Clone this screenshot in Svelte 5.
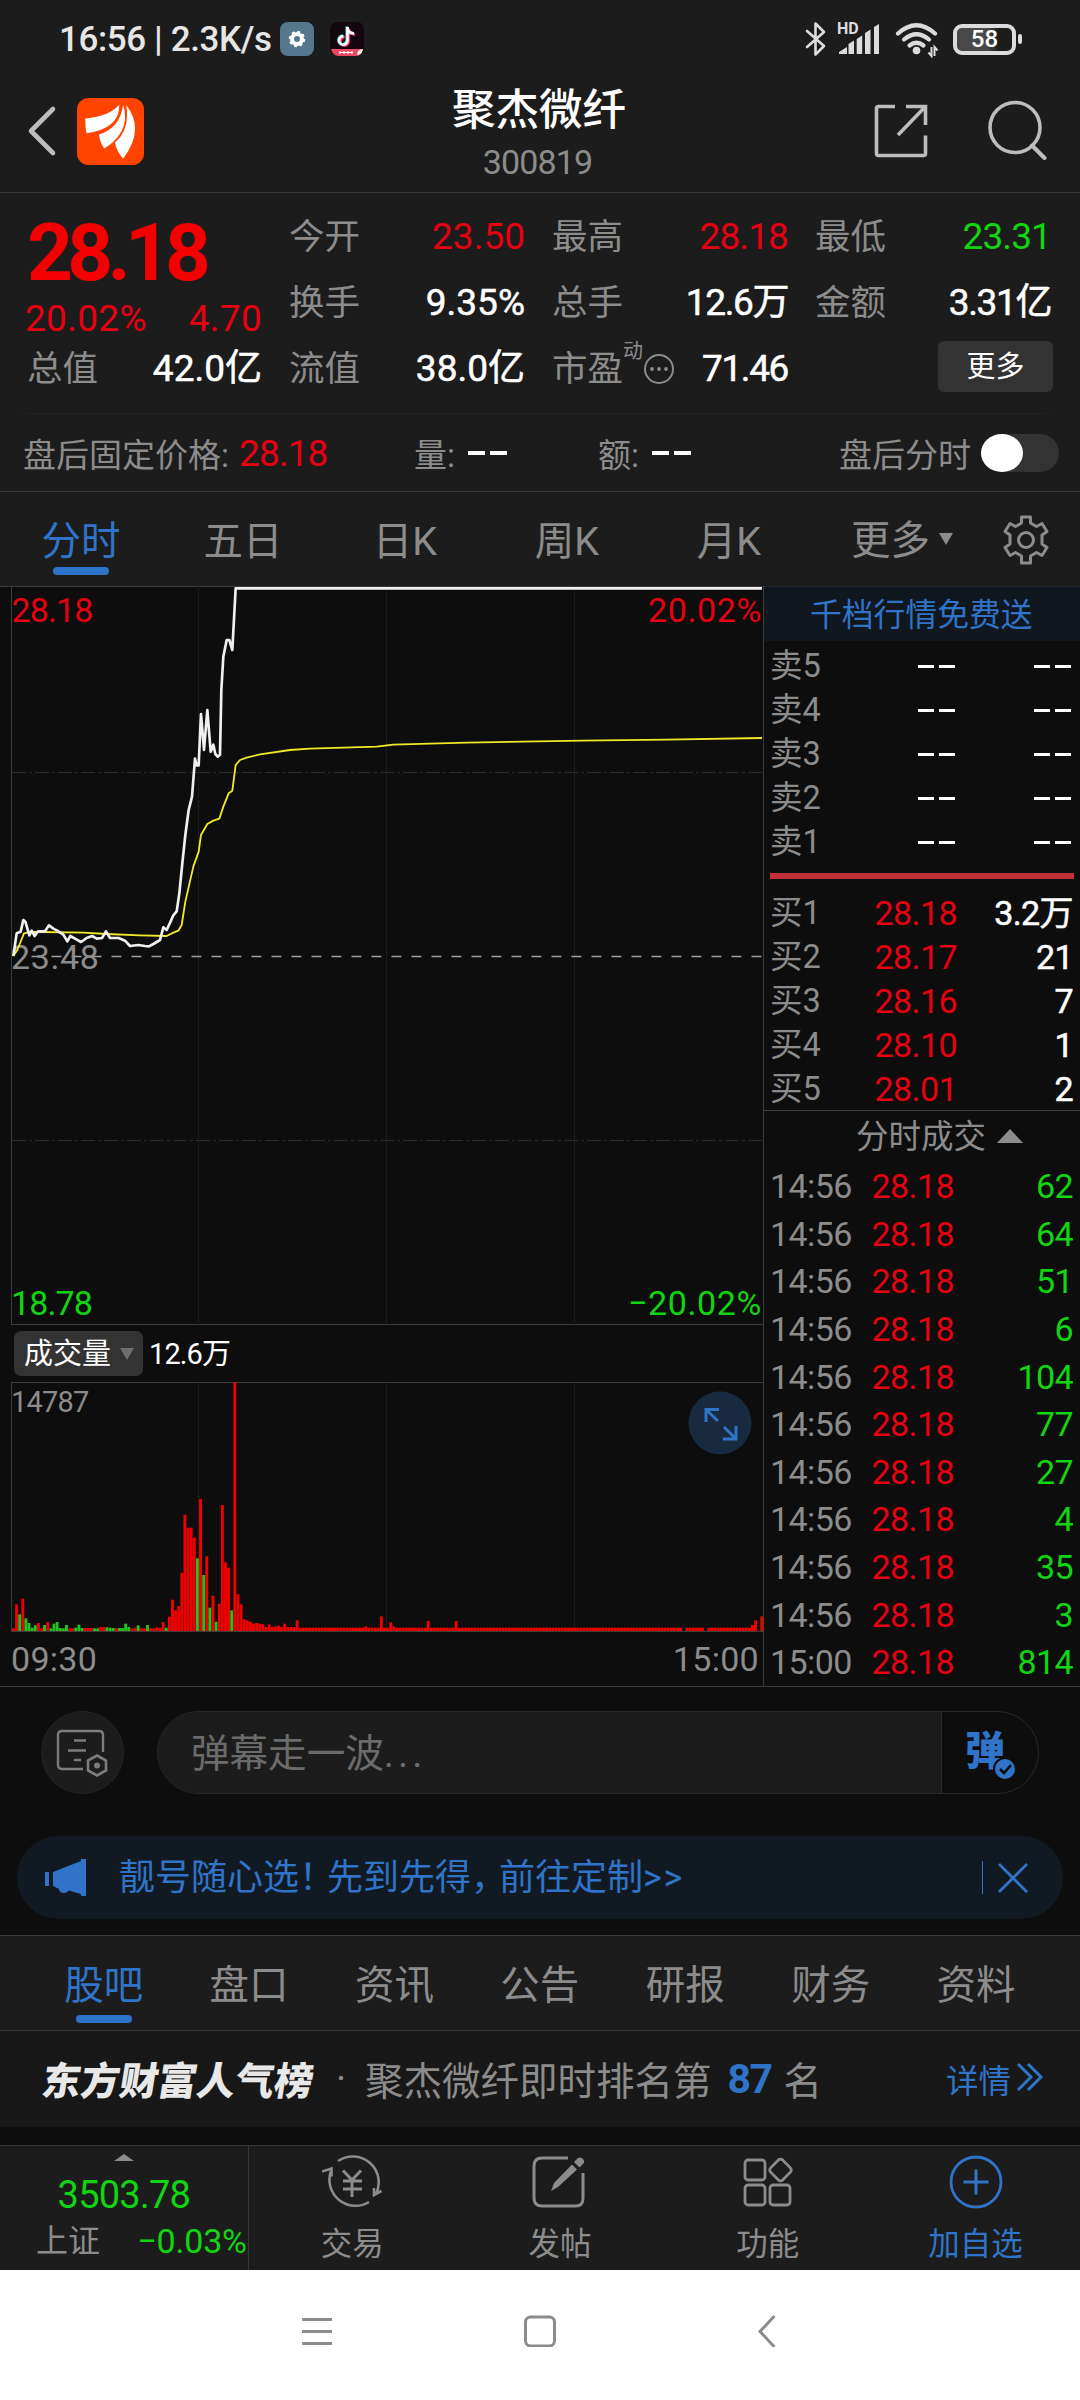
<script>
  const stats = [
    { label: '今开', value: '23.50', tone: 'red', col: 2, row: 1 },
    { label: '最高', value: '28.18', tone: 'red', col: 3, row: 1 },
    { label: '最低', value: '23.31', tone: 'green', col: 4, row: 1 },
    { label: '换手', value: '9.35%', tone: 'white', col: 2, row: 2 },
    { label: '总手', value: '12.6万', tone: 'white', col: 3, row: 2 },
    { label: '金额', value: '3.31亿', tone: 'white', col: 4, row: 2 },
    { label: '总值', value: '42.0亿', tone: 'white', col: 1, row: 3 },
    { label: '流值', value: '38.0亿', tone: 'white', col: 2, row: 3 }
  ];
  const periods = ['分时', '五日', '日K', '周K', '月K'];
  const sells = [5, 4, 3, 2, 1];
  const buys = [
    ['28.18', '3.2万'],
    ['28.17', '21'],
    ['28.16', '7'],
    ['28.10', '1'],
    ['28.01', '2']
  ];
  const trades = [
    ['14:56', 62], ['14:56', 64], ['14:56', 51], ['14:56', 6], ['14:56', 104], ['14:56', 77],
    ['14:56', 27], ['14:56', 4], ['14:56', 35], ['14:56', 3], ['15:00', 814]
  ];
  const sections = ['股吧', '盘口', '资讯', '公告', '研报', '财务', '资料'];

  // Minute volumes, in thirds of a pixel; a negative number is a falling minute.
  const volumes = [
    8, 80, -50, 97, -38, -24, -10, -17, 24, 8, -18, 27, -8, -22, -27, -9, -8, -18, 8, 8, -10, -19, -9, 9, 9,
    9, -8, -8, 12, 12, -11, -10, -9, 8, -9, -9, -22, -12, 8, 10, -17, 8, 8, -18, 8, 8, 11, 10, 27, -10, 43,
    94, 62, 75, 175, 349, 310, 310, 280, -218, 396, -168, 224, -70, 106, -28, 82, 378, 206, 190, -62, 746,
    110, 80, 35, 32, 28, 22, 24, 22, 20, 12, 20, 12, 14, 16, 12, 22, 12, 12, 12, 32
  ];
  const spikes = { 113: 14, 118: 44, 121: 26, 122: 14, 133: 30, 142: 30, 215: 0, 222: 0, 237: 18, 238: 32, 239: 0, 240: 44 };
  const bars = Array.from({ length: 241 }, (_, i) => {
    const v = volumes[i] ?? spikes[i] ?? 10;
    return { x: 12 + i * 3.118, h: Math.abs(v) / 3, up: v > 0 };
  });

  const price =
    '40,1128 50,1060 62,1055 70,1020 76,1025 88,1066 95,1052 104,1068 114,1054 135,1054 147,1036 160,1046 172,1052 190,1064 202,1084 211,1068 225,1076 243,1086 260,1074 276,1068 290,1076 306,1074 318,1054 330,1074 356,1074 375,1082 390,1098 415,1095 435,1098 447,1099 460,1092 480,1080 490,1042 500,1050 512,1024 520,1006 530,994 538,940 548,840 556,765 566,690 576,650 585,536 590,556 596,556 603,402 612,510 622,390 632,515 640,494 646,522 653,530 660,524 664,330 670,230 680,180 688,180 697,210 707,25 2286,25';
  const average =
    '40,1128 52,1110 72,1060 90,1056 120,1056 250,1058 320,1062 420,1066 500,1068 520,1058 535,1052 545,1035 556,965 580,860 596,815 603,765 622,732 640,722 658,716 670,680 686,640 697,632 707,555 720,540 740,533 780,523 870,510 930,506 1130,500 1180,494 1400,488 1745,482 2000,479 2286,474';
</script>

<div class="screen">
  <div class="status">
    <span class="clock">16:56 | 2.3K/s</span>
    <svg class="app-gear" viewBox="0 0 34 34"><rect width="34" height="34" rx="8" fill="#56788f" /><circle cx="17" cy="17" r="5" fill="none" stroke="#fff" stroke-width="4" /><circle cx="17" cy="17" r="7" fill="none" stroke="#fff" stroke-width="2.4" stroke-dasharray="2.75 2.75" /></svg>
    <svg class="app-tok" viewBox="0 0 34 34"><rect width="34" height="34" rx="7" fill="#14060f" /><path d="M17.5 6v12.5a4.2 4.2 0 1 1-4-4.2M17.500 6c.5 3.500 3 5.500 6.500 5.500" transform="translate(1.200 .8)" fill="none" stroke="#fb2c5a" stroke-width="2.800" /><path d="M17.5 5v13.500a4.200 4.200 0 1 1-4-4.200M17.500 6c.5 3.500 3 5.500 6.500 5.500" transform="translate(-.6 -.4)" fill="none" stroke="#4ee7ea" stroke-width="2.800" /><path d="M17.500 5v13.500a4.200 4.200 0 1 1-4-4.200M17.500 6c.5 3.500 3 5.500 6.500 5.500" fill="none" stroke="#fff" stroke-width="2.600" /><path d="M1 27h32l-2 5q-2 2-5 2H8q-5 0-7-7z" fill="#f0455f" /><path d="M9 30.500h14M10 29v3M14 29v3M18 29v3M22 29v3" stroke="#fff" stroke-width="1.200" /><path d="M27 33q0-6 6-6-1 6-6 6z" fill="#fff0dc" /></svg>
    <span class="grow"></span>
    <svg class="bt" viewBox="0 0 22 36"><path d="M2 10l17 15-8.500 8.500V2.500L19 11 2 26" fill="none" stroke="#dcdcdc" stroke-width="2.600" stroke-linejoin="round" stroke-linecap="round" /></svg>
    <span class="signal"><small>HD</small><svg viewBox="0 0 42 30"><path d="M1 30v-2l8-5v7zM10.500 30V20l5.500-3.500V30zM18.700 30V15l5.500-3.500V30zM27 30V9l5.500-3.500V30zM36 30V3l5-3v30z" fill="#dcdcdc" /></svg></span>
    <svg class="wifi" viewBox="0 0 44 36"><g fill="none" stroke="#dcdcdc" stroke-width="4.200" stroke-linecap="round"><path d="M3 11.500Q21.500-5 40 11.500" /><path d="M9 17.500Q21.500 7 34 17.500" /><path d="M14.500 23.500q7-5.500 14 0" /></g><circle cx="21.500" cy="28.500" r="3.800" fill="#dcdcdc" /><path d="M36.500 25v9l-3-3.500M39.500 34v-9l3 3.500" fill="none" stroke="#dcdcdc" stroke-width="2" /></svg>
    <span class="battery"><span>58</span></span>
  </div>

  <header>
    <svg class="back" viewBox="0 0 30 52"><path d="M26 4L4 26l22 22" fill="none" stroke="#bdbdbd" stroke-width="4.600" stroke-linecap="round" stroke-linejoin="round" /></svg>
    <svg class="logo" viewBox="225 293 192 200" preserveAspectRatio="none"><rect x="225" y="293" width="192" height="200" rx="34" fill="#ff4400" /><path d="M249 354Q318 347 346 313Q348 384 252 398Q248 376 249 354zM288 402Q349 382 357 313Q381 392 303 444Q290 424 288 402zM334 426Q378 386 366 314Q421 388 357 474Q338 452 334 426z" fill="#fff" /></svg>
    <div class="title"><h1>聚杰微纤</h1><p>300819</p></div>
    <svg class="share" viewBox="0 0 54 54"><path d="M21 2.500H4.500q-2 0-2 2v45q0 2 2 2h45q2 0 2-2V31.500M32 2.500h19.500V21M51 3L24 31" fill="none" stroke="#bdbdbd" stroke-width="3.600" stroke-linecap="butt" /></svg>
    <svg class="search" viewBox="0 0 60 60"><circle cx="27" cy="27.500" r="25" fill="none" stroke="#bdbdbd" stroke-width="3.600" /><path d="M44 45.500L56.500 58" stroke="#bdbdbd" stroke-width="4" stroke-linecap="round" /></svg>
  </header>

  <section class="quote">
    <div class="last">
      <strong>28.18</strong>
      <div class="change"><span>20.02%</span><span>4.70</span></div>
    </div>
    {#each stats as s}
      <div class="stat c{s.col} r{s.row}"><span class="label">{s.label}</span><span class="num {s.tone}" class:tight={s.value.includes('1')}>{s.value}</span></div>
    {/each}
    <div class="stat c3 r3">
      <span class="label">市盈<sup>动</sup></span>
      <svg class="dots" viewBox="0 0 32 32"><circle cx="16" cy="16" r="14" fill="none" stroke="#8c8c8c" stroke-width="2" /><g fill="#8c8c8c"><circle cx="9" cy="16" r="1.900" /><circle cx="16" cy="16" r="1.900" /><circle cx="23" cy="16" r="1.900" /></g></svg>
      <span class="num white tight">71.46</span>
    </div>
    <div class="stat c4 r3"><button class="more">更多</button></div>
  </section>

  <section class="after">
    <span class="fixed">盘后固定价格:</span><span class="num red tight">28.18</span>
    <span class="qty">量:</span><i class="dash"></i>
    <span class="amt">额:</span><i class="dash"></i>
    <span class="grow"></span>
    <span>盘后分时</span><span class="toggle"></span>
  </section>

  <nav class="periods">
    {#each periods as p, i}<span class="tab" class:on={i === 0}>{p}</span>{/each}
    <span class="drop">更多<svg viewBox="0 0 14 12"><path d="M0 0h14L7 12z" fill="#8c8c8c" /></svg></span>
    <svg class="gear" viewBox="0 0 48 50"><path d="M19.500 2h9v6l6 3.500 5.500-3 5 8-5 3.500v9l5 3.500-5 8-5.500-3-6 3.500v7h-9v-7l-6-3.500-5.500 3-5-8 5-3.500v-9l-5-3.500 5-8 5.500 3 6-3.500z" fill="none" stroke="#8c8c8c" stroke-width="3" stroke-linejoin="round" /><circle cx="24" cy="25" r="7.500" fill="none" stroke="#8c8c8c" stroke-width="3" /></svg>
  </nav>

  <main>
    <div class="charts">
      <svg class="chart" viewBox="0 0 763 739">
        <g fill="none" stroke="#2c2c2c">
          <path d="M11.500 0V739M0 .5H763M11 738.500H763" stroke="#3c3c3c" />
          <path d="M198.500 0V739M386.500 0V739M574.500 0V739" stroke-dasharray="1 1" />
          <path d="M12 186.500H763M12 554.500H763" stroke-dasharray="14 3 3 3" />
        </g>
        <text class="lbl red tight" x="11.500" y="36">28.18</text>
        <text class="lbl red" x="762" y="36" text-anchor="end">20.02%</text>
        <path d="M31.500 370.500H763" stroke="#a0a0a0" stroke-width="1.500" stroke-dasharray="10 10" />
        <text class="lbl gray" x="11" y="383">23.48</text>
        <text class="lbl green tight" x="11" y="729">18.78</text>
        <text class="lbl green" x="762" y="729" text-anchor="end">−20.02%</text>
        <g transform="translate(0 -6) scale(.33333)" fill="none" stroke-linejoin="round">
          <polyline points={average} stroke="#f0ea28" stroke-width="5.500" />
          <polyline points={price} stroke="#f0f0f0" stroke-width="8" />
        </g>
      </svg>
      <div class="legend">
        <button>成交量<svg viewBox="0 0 14 12"><path d="M0 0h14L7 12z" fill="#6e6e6e" /></svg></button>
        <span>12.6万</span>
      </div>
      <div class="volume">
        <svg class="chart" viewBox="0 0 763 250">
          <g fill="none">
            <path d="M11.500 0V250M11 .5H763M11 249.500H763" stroke="#3c3c3c" />
            <path d="M198.500 0V250M386.500 0V250M574.500 0V250" stroke="#2c2c2c" stroke-dasharray="1 1" />
          </g>
          <text class="lbl small gray" x="11" y="30">14787</text>
          {#each bars as b}<rect x={b.x} y={249 - b.h} width="2.900" height={b.h} fill={b.up ? '#f00000' : '#22c41c'} />{/each}
        </svg>
        <svg class="expand" viewBox="0 0 64 64"><circle cx="32" cy="32" r="31.500" fill="#182a40" /><path d="M18 31V18.500h13M18.500 19L30 30M48 35v13H35M48 48L36 36" fill="none" stroke="#2f74c8" stroke-width="3" /></svg>
      </div>
      <div class="hours"><span>09:30</span><span>15:00</span></div>
    </div>

    <aside>
      <div class="promo">千档行情免费送</div>
      <div class="book sell">
        {#each sells as n}<div class="line"><span>卖{n}</span><i class="dash"></i><i class="dash"></i></div>{/each}
      </div>
      <div class="ratio"></div>
      <div class="book">
        {#each buys as [p, v], i}<div class="line"><span>买{i + 1}</span><b class="red">{p}</b><b class="white">{v}</b></div>{/each}
      </div>
      <div class="ticks-head">分时成交<svg viewBox="0 0 26 14"><path d="M0 14L13 0l13 14z" fill="#8c8c8c" /></svg></div>
      <div class="ticks">
        {#each trades as [t, v]}<div class="line"><span>{t}</span><b class="red">28.18</b><b class="green">{v}</b></div>{/each}
      </div>
    </aside>
  </main>

  <section class="comment">
    <span class="round"><svg viewBox="0 0 52 48"><g fill="none" stroke="#7c7c7c" stroke-width="2.400"><path d="M27 40H6q-4 0-4-4V6q0-4 4-4h37q4 0 4 4v17M18 11.500h12M12 21.500h18M18 31h7" /><path d="M41 26.500l9 5v10l-9 5-9-5v-10z" stroke-width="2.600" /></g><circle cx="41" cy="36.500" r="3" fill="#7c7c7c" /></svg></span>
    <div class="field">
      <span class="hint">弹幕走一波<em>...</em></span>
      <span class="barrage">弹<svg viewBox="0 0 24 24"><circle cx="12" cy="12" r="11" fill="#2f74c8" stroke="#0d0d0d" stroke-width="2" /><path d="M7 12l4 4 7-8" fill="none" stroke="#0d0d0d" stroke-width="2.600" /></svg></span>
    </div>
  </section>

  <section class="banner">
    <svg class="horn" viewBox="0 0 42 38"><path d="M0 13h4v14H0zM8 13L36 2V0h5v37h-5v-2l-12-3.500q-3 3-6 2.500-4-1-4-4L8 27z" fill="#2f74c8" /></svg>
    <span class="text">靓号随心选<em>！</em>先到先得<em>，</em>前往定制<u>&gt;&gt;</u></span>
    <span class="grow"></span>
    <i class="bar"></i>
    <svg class="close" viewBox="0 0 30 30"><path d="M1 1l28 28M29 1L1 29" stroke="#2f74c8" stroke-width="2.800" /></svg>
  </section>

  <nav class="sections">
    {#each sections as s, i}<span class="tab" class:on={i === 0}>{s}</span>{/each}
  </nav>

  <section class="rank">
    <strong>东方财富人气榜</strong>
    <span class="point">·</span>
    <span class="text">聚杰微纤即时排名第</span><b>87</b><span class="text">名</span>
    <span class="grow"></span>
    <span class="detail">详情</span>
    <svg viewBox="0 0 28 30"><path d="M2 2l13 13L2 28M12 2l13 13L12 28" fill="none" stroke="#2f74c8" stroke-width="3" /></svg>
  </section>

  <footer>
    <div class="index">
      <svg viewBox="0 0 20 7"><path d="M0 7L10 0l10 7z" fill="#8c8c8c" /></svg>
      <strong>3503.78</strong>
      <div><span>上证</span><b>−0.03%</b></div>
    </div>
    <div class="action">
      <svg viewBox="0 0 60 56"><g fill="none" stroke="#8c8c8c" stroke-width="2.600"><path d="M16 7a26 26 0 0 1 38 33M47 48A26 26 0 0 1 9 17M0 17.500L9.500 14.500v8M52 34v7l7.500-4" /><path d="M21 16.500L30 26l9-9.500M21 27h19M21 35h19M30 26v17" stroke-width="3" /></g></svg>
      <span>交易</span>
    </div>
    <div class="action">
      <svg viewBox="0 0 60 56"><path d="M38 4H12q-8 0-8 8v32q0 8 8 8h34q7 0 7-8V19" fill="none" stroke="#8c8c8c" stroke-width="3" /><path d="M21 37l3-8L42 10.500l5 5L28 33zM44 8l4-4q3-1.500 5 1t.5 4.500l-4 4z" fill="#8c8c8c" /></svg>
      <span>发帖</span>
    </div>
    <div class="action">
      <svg viewBox="0 0 60 56"><g fill="none" stroke="#8c8c8c" stroke-width="2.800"><rect x="7" y="6" width="20" height="20" rx="3" /><rect x="7" y="31" width="20" height="20" rx="3" /><rect x="32" y="31" width="20" height="20" rx="3" /><rect x="34" y="7.500" width="17" height="17" rx="3" transform="rotate(45 42.500 16)" /></g></svg>
      <span>功能</span>
    </div>
    <div class="action on">
      <svg viewBox="0 0 60 56"><circle cx="30" cy="28" r="25" fill="none" stroke="#2f74c8" stroke-width="2.800" /><path d="M17.500 28h25M30 15.500v25" stroke="#2f74c8" stroke-width="3" /></svg>
      <span>加自选</span>
    </div>
  </footer>

  <div class="system">
    <svg viewBox="0 0 32 32"><path d="M1 4.500h30M1 16.500h30M1 28.500h30" stroke="#8c8c8c" stroke-width="3" /></svg>
    <svg viewBox="0 0 32 32"><rect x="1.500" y="2" width="29" height="29" rx="5" fill="none" stroke="#8c8c8c" stroke-width="3" /></svg>
    <svg viewBox="0 0 32 32"><path d="M27.500 1L13 16.500 27.500 32" fill="none" stroke="#8c8c8c" stroke-width="3" /></svg>
  </div>
</div>

<style>
  :global(body) { margin: 0; background: #0d0d0d; }
  .screen { width: 1080px; height: 2400px; overflow: hidden; display: flex; flex-direction: column; background: #0d0d0d; color: #8c8c8c; font-family: Roboto, "Noto Sans CJK SC", sans-serif; font-weight: 400; }
  .screen * { box-sizing: border-box; }
  .screen > * { flex: none; }
  svg { display: block; flex: none; }
  span, b, strong { white-space: nowrap; }
  button { border: 0; padding: 0; font: inherit; color: #fff; }
  .grow { flex: 1; }
  .red { color: #e60012; fill: #e60012; }
  .green { color: #12d512; fill: #12d512; }
  .white { color: #fff; -webkit-text-stroke: .5px #fff; }
  .gray { fill: #8c8c8c; }

  .status { height: 80px; display: flex; align-items: center; padding: 0 58px 2px 59px; background: #1c1c1c; }
  .clock { width: 221px; font-size: 35px; line-height: 42px; padding-top: 2px; font-weight: 500; letter-spacing: -.4px; color: #e6e6e6; }
  .app-gear, .app-tok { width: 34px; height: 34px; margin-right: 16px; }
  .bt { width: 22px; height: 36px; margin-right: 11px; }
  .signal { position: relative; width: 42px; height: 30px; margin-right: 15px; }
  .signal svg { width: 42px; height: 30px; }
  .signal small { position: absolute; left: -1px; top: -3px; font-size: 16px; line-height: 16px; font-weight: 700; color: #dcdcdc; }
  .wifi { width: 44px; height: 36px; margin: 2px 14px 0 0; }
  .battery { position: relative; width: 63px; height: 31px; margin-right: 6px; border: 4px solid #dcdcdc; border-radius: 9px; display: grid; place-items: center; background: linear-gradient(90deg, #484848 55%, #1c1c1c 75%); background-clip: padding-box; color: #fff; font-size: 24px; font-weight: 500; line-height: 23px; }
  .battery::after { content: ""; position: absolute; right: -10px; top: 6px; width: 4px; height: 10px; border-radius: 2px; background: #dcdcdc; }

  header { height: 113px; display: flex; align-items: flex-start; background: #1c1c1c; border-bottom: 1px solid #383838; padding: 0 32px 0 27px; }
  .back { width: 30px; height: 52px; margin: 25px 20px 0 0; }
  .logo { width: 67px; height: 67px; margin-top: 18px; }
  .title { flex: 1; padding: 7px 0 0 0; text-align: center; }
  .title h1 { margin: 0 0 0 60px; font-size: 43.500px; line-height: 48px; font-weight: 500; color: #fff; }
  .title p { margin: 3px 0 0 57px; font-size: 34px; line-height: 48px; letter-spacing: -.9px; }
  .share { width: 54px; height: 54px; margin: 24px 60px 0 0; }
  .search { width: 60px; height: 60px; margin-top: 20px; }

  .quote { height: 220px; display: grid; grid-template-columns: 235px 236px 236px 236px; grid-template-rows: 66px 66px 66px; column-gap: 27px; padding: 11px 28px 0 27px; background: #1c1c1c; }
  .last { grid-area: 1 / 1 / 3 / 2; color: #f50000; }
  .last strong { display: block; padding-top: 4px; font-size: 80px; line-height: 90px; letter-spacing: -5.700px; font-weight: 700; }
  .change { display: flex; justify-content: space-between; margin: -1px 0 0 -2px; font-size: 37px; line-height: 44px; letter-spacing: .3px; color: #e60012; }
  .stat { display: flex; align-items: center; font-size: 35.500px; line-height: 66px; }
  .c1 { grid-column: 1; } .c2 { grid-column: 2; } .c3 { grid-column: 3; } .c4 { grid-column: 4; }
  .r1 { grid-row: 1; } .r2 { grid-row: 2; } .r3 { grid-row: 3; }
  .num { font-size: 37px; letter-spacing: 0; }
  .num.tight { letter-spacing: -.9px; }
  .num.white.tight { letter-spacing: -1.400px; }
  .stat .num, .stat .more { margin-left: auto; }
  sup { font-size: 20px; line-height: 20px; position: relative; top: -10px; }
  .dots { width: 32px; height: 32px; }
  .more { width: 115px; height: 51px; margin: -6px -2px 0 0; border-radius: 6px; background: #333; font-size: 29px; line-height: 53px; }

  .after { height: 79px; display: flex; align-items: center; border-bottom: 1px solid #383838; background: linear-gradient(90deg, #1c1c1c 16px, #262626 40px, #262626 1030px, #1c1c1c 1060px) top / 100% 1px no-repeat #1c1c1c; padding: 2px 21px 0 23px; font-size: 33px; }
  .fixed { width: 216px; }
  .after .num { width: 175px; }
  .qty { width: 54px; }
  .amt { width: 54px; margin-left: 91px; }
  .dash { display: block; width: 39px; height: 4px; background: linear-gradient(90deg, #fff 17px, transparent 17px, transparent 22px, #fff 22px); }
  .toggle { position: relative; width: 78px; height: 38px; margin-left: 10px; border-radius: 19px; background: #333; }
  .toggle::after { content: ""; position: absolute; left: 0; top: 0; width: 42px; height: 38px; border-radius: 50%; background: #fff; }

  .periods { height: 94px; display: flex; background: #1c1c1c; font-size: 39.500px; line-height: 99px; }
  .tab { position: relative; text-align: center; }
  .tab.on { color: #2f74c8; }
  .tab.on::after { content: ""; position: absolute; left: 50%; bottom: 10px; width: 56px; height: 8px; margin-left: -28px; border-radius: 4px; background: #2f74c8; }
  .periods .tab { width: 162px; }
  .periods .tab.on::after { bottom: 11px; }
  .drop { display: flex; align-items: center; gap: 9px; width: 191px; margin-left: 41px; height: 96px; }
  .drop svg { width: 14px; height: 12px; margin-top: -3px; }
  .gear { width: 48px; height: 50px; margin-top: 23px; margin-left: -40px; }

  main { height: 1101px; display: flex; border-bottom: 1px solid #3c3c3c; }
  .charts { width: 763px; }
  .chart { width: 763px; }
  .lbl { font-size: 34px; letter-spacing: .6px; }
  .lbl.tight { letter-spacing: -.9px; }
  .lbl.small { font-size: 29px; letter-spacing: -.8px; }
  .legend { height: 57px; display: flex; align-items: center; padding-left: 14px; gap: 6px; color: #fff; font-size: 29px; letter-spacing: -.9px; line-height: 44px; }
  .legend button { width: 129px; height: 45px; display: flex; align-items: center; gap: 9px; padding-left: 10px; border-radius: 7px; background: #333; }
  .legend button svg { width: 14px; height: 12px; }
  .volume { position: relative; height: 250px; }
  .expand { position: absolute; left: 688px; top: 9px; width: 64px; height: 64px; }
  .hours { display: flex; justify-content: space-between; padding: 0 4px 0 11px; font-size: 34px; line-height: 54px; letter-spacing: .3px; }

  aside { width: 317px; border-left: 1px solid #3c3c3c; }
  .promo { height: 55px; border-top: 1px solid #1e2a36; background: #10171f; color: #2f74c8; font-size: 31.800px; line-height: 57px; padding-left: 46px; }
  .line { display: grid; grid-template-columns: 101px 86px 1fr; align-items: center; height: 44px; padding: 0 7px 0 6px; font-size: 34px; line-height: 44px; letter-spacing: -.6px; }
  .line > :nth-child(n + 2) { justify-self: end; }
  .book .line > span { font-size: 32.500px; line-height: 38px; margin-top: -1px; letter-spacing: 0; }
  .line b { font-weight: 400; }
  .line .dash { width: 37px; height: 3px; margin-right: 2px; background: linear-gradient(90deg, #fff 16px, transparent 16px, transparent 21px, #fff 21px); }
  .book.sell { padding-top: 3px; height: 231px; }
  .ratio { height: 6px; margin: 1px 6px 0 6px; background: #c03038; }
  .book { height: 231px; padding-top: 12px; }
  .ticks-head { height: 53px; display: flex; align-items: center; gap: 11px; padding: 0 0 0 92px; border-top: 1px solid #3c3c3c; font-size: 32.500px; line-height: 52px; }
  .ticks-head svg { width: 26px; height: 14px; margin-top: -2px; }
  .ticks .line { height: 47.600px; line-height: 47px; grid-template-columns: 85px 99px 1fr; }

  .comment { height: 148px; display: flex; padding: 24px 41px 41px; }
  .round { width: 83px; height: 83px; display: grid; place-items: center; border-radius: 50%; border: 1px solid #242424; background: #1c1c1c; }
  .round svg { width: 52px; height: 48px; }
  .field { width: 883px; height: 83px; margin-left: 33px; display: flex; border: 1px solid #2a2a2a; border-radius: 42px; overflow: hidden; }
  .hint { width: 784px; padding-left: 33px; border-right: 1px solid #2a2a2a; background: #1c1c1c; color: #6b6b6b; font-size: 38.600px; line-height: 83px; }
  .hint em { font-style: normal; letter-spacing: 4px; }
  .barrage { position: relative; padding-left: 23px; font-size: 40px; font-weight: 900; line-height: 80px; color: #2f74c8; }
  .barrage svg { position: absolute; left: 51px; top: 45px; width: 24px; height: 24px; }

  .banner { height: 83px; margin: 1px 17px 16px; display: flex; align-items: center; padding: 0 35px 0 28px; border-radius: 42px; background: #111a22; color: #2f74c8; font-size: 36px; }
  .banner .text { line-height: 44px; }
  .horn { width: 42px; height: 38px; margin-right: 32px; }
  .banner em { font-style: normal; letter-spacing: -8px; }
  .banner u { text-decoration: none; letter-spacing: 1.500px; }
  .bar { width: 1px; height: 33px; margin-right: 15px; background: #2f74c8; }
  .close { width: 30px; height: 30px; }

  .sections { height: 96px; display: flex; padding: 0 31px; background: #1c1c1c; border-top: 1px solid #383838; border-bottom: 1px solid #383838; font-size: 39.500px; line-height: 100px; }
  .sections .tab { width: 145.400px; }
  .sections .tab.on::after { bottom: 7px; }

  .rank { height: 96px; display: flex; align-items: center; padding: 0 36px 2px 43px; background: #181818; font-size: 38.500px; }
  .rank strong { width: 293px; font-size: 38.700px; font-weight: 900; color: #e8e8e8; transform: skewX(-9deg); }
  .point { width: 29px; }
  .rank b { margin: 2px 12px 0 16px; font-size: 41px; font-weight: 700; letter-spacing: -1.500px; color: #2f74c8; }
  .rank .detail { margin-right: 5px; font-size: 32.500px; color: #2f74c8; }
  .rank svg { width: 28px; height: 30px; margin-top: -2px; }

  footer { height: 125px; margin-top: 18px; display: flex; border-top: 1px solid #383838; background: #1c1c1c; }
  .index { width: 249px; border-right: 1px solid #383838; display: flex; flex-direction: column; align-items: center; color: #12d512; padding-top: 8px; }
  .index svg { width: 20px; height: 7px; }
  .index strong { font-size: 38px; font-weight: 400; line-height: 44px; letter-spacing: -.8px; margin-top: 12px; }
  .index div { align-self: stretch; display: flex; align-items: center; justify-content: space-between; padding: 0 1px 0 36px; font-size: 32px; line-height: 48px; }
  .index span { color: #8c8c8c; }
  .index b { font-size: 34px; font-weight: 400; letter-spacing: -.2px; }
  .action { width: 208px; display: flex; flex-direction: column; align-items: center; padding: 8px 1px 0 0; font-size: 31.500px; line-height: 70px; }
  .action svg { width: 60px; height: 56px; }
  .action.on { color: #2f74c8; }

  .system { height: 130px; display: flex; justify-content: center; gap: 191px; background: #fff; padding-top: 45px; }
  .system svg { width: 32px; height: 32px; }
</style>
